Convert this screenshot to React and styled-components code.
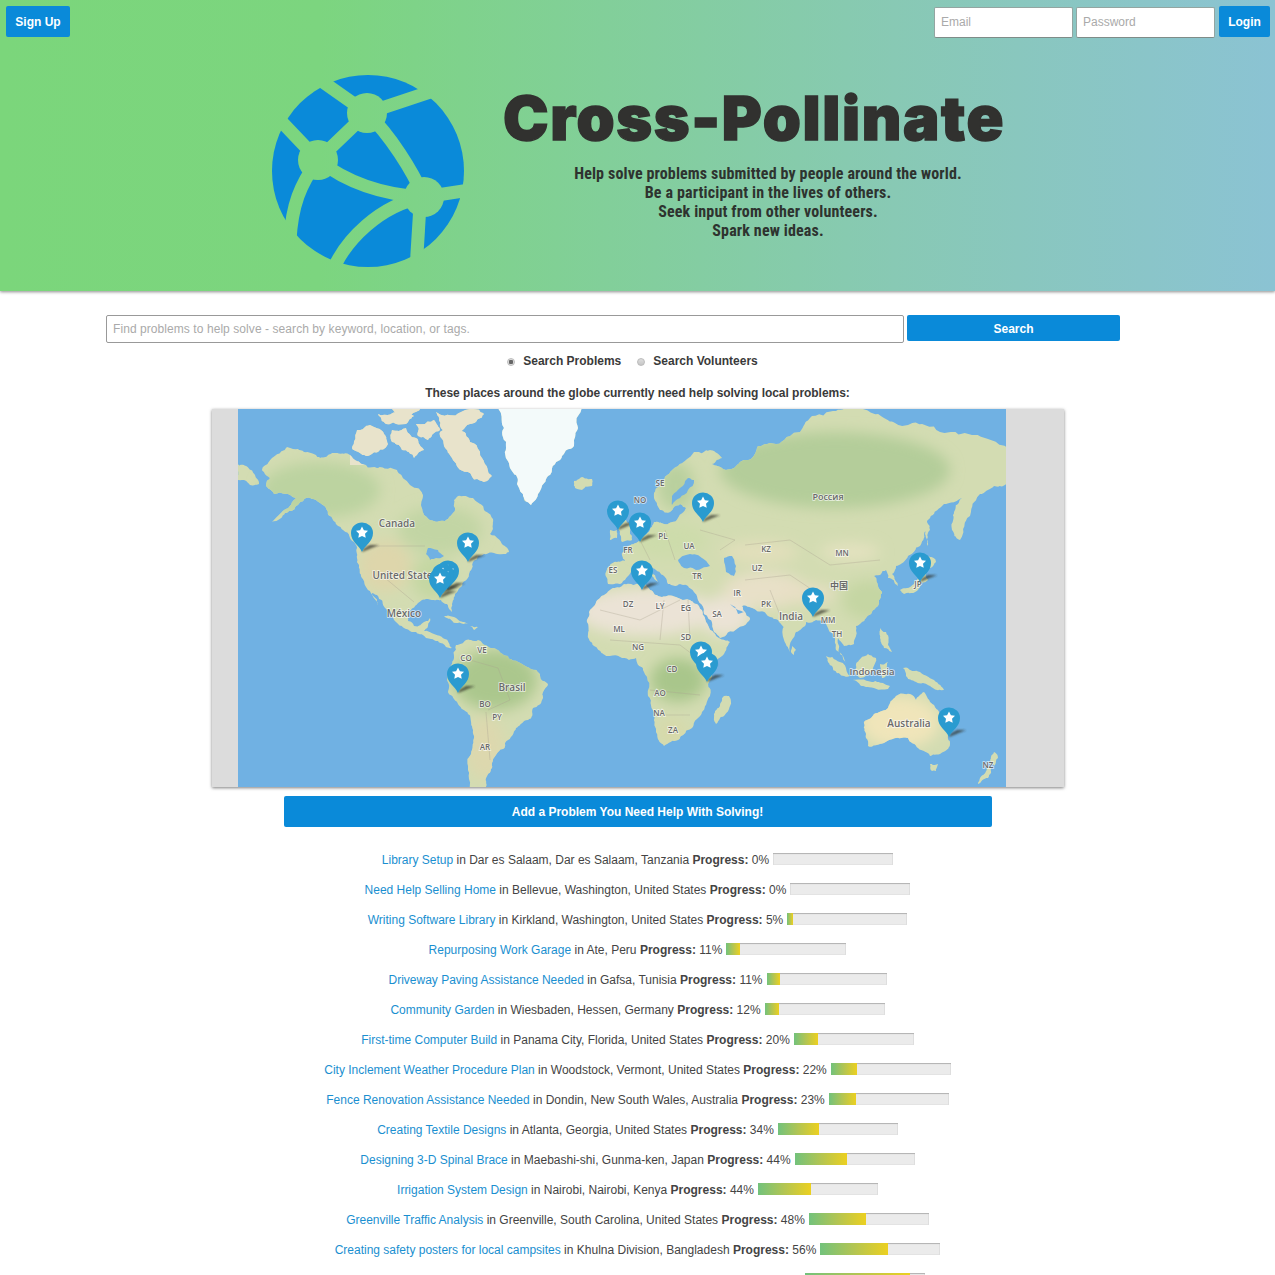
import React from "react";
import styled, { createGlobalStyle } from "styled-components";

const BLUE = "#0a8ad9";

const GlobalStyle = createGlobalStyle`
  html, body {
    margin: 0;
    padding: 0;
    overflow: hidden;
    background: #fff;
    font-family: "Liberation Sans", Arial, sans-serif;
    font-size: 12px;
    color: #333;
  }
  * {
    box-sizing: border-box;
  }
`;

const Hero = styled.header`
  height: 291px;
  background: linear-gradient(90deg, #7bd67b 0%, #7cd57f 25%, #88c9b4 70%, #8bc3d3 100%);
  box-shadow: 0 1px 3px rgba(0, 0, 0, 0.45);
`;

const TopBar = styled.div`
  display: flex;
  justify-content: space-between;
  padding: 6px 5px 0 6px;
`;

const LoginForm = styled.form`
  display: flex;
  gap: 3px;
`;

const Button = styled.button`
  height: 31px;
  padding: 0 9px;
  border: 0;
  border-radius: 2px;
  background: ${BLUE};
  color: #fff;
  font: bold 12px "Liberation Sans", Arial, sans-serif;
`;

const SignUpButton = styled(Button)`
  width: 64px;
  padding: 0;
`;

const LoginButton = styled(Button)`
  width: 51px;
  margin-left: 1px;
  padding: 0;
`;

const TextInput = styled.input`
  width: 139px;
  height: 31px;
  margin-top: 1px;
  padding: 0 6px 2px;
  border: 1px solid #93a5a1;
  border-bottom-color: #7f8c88;
  border-radius: 2px;
  background: #fff;
  font: 12px "Liberation Sans", Arial, sans-serif;
  &::placeholder {
    color: #aaa;
    opacity: 1;
  }
`;

const Brand = styled.div`
  display: flex;
  gap: 39px;
  padding: 37px 0 0 272px;
`;

const BrandText = styled.div`
  width: 530px;
`;

const Title = styled.h1`
  margin: 0;
  width: 500px;
  font: 900 61px/86px Inter, "Liberation Sans", sans-serif;
  letter-spacing: 1.65px;
  white-space: nowrap;
  color: #31312f;
  -webkit-text-stroke: 1.4px #31312f;
`;

const Tagline = styled.p`
  margin: 3px 0 0;
  text-align: center;
  font: bold 16px/19px "Liberation Sans Narrow", "Roboto Condensed", Roboto, sans-serif;
  letter-spacing: 0.14px;
  color: #2e332f;
`;

const Main = styled.main`
  display: flex;
  flex-direction: column;
  align-items: center;
`;

const SearchRow = styled.div`
  display: flex;
  align-items: flex-start;
  gap: 3px;
  width: 1014px;
  margin: 24px 49px 0 0;
`;

const SearchInput = styled(TextInput)`
  flex: 1;
  width: auto;
  height: 28px;
  margin: 0;
  padding: 0 6px;
  border: 1px solid #999;
  letter-spacing: 0.07px;
`;

const SearchButton = styled(Button)`
  width: 213px;
  height: 26px;
  padding-top: 1px;
`;

const RadioRow = styled.div`
  display: flex;
  gap: 16px;
  margin: 10px 10px 0 0;
  height: 15px;
  align-items: center;
`;

const RadioLabel = styled.label`
  display: flex;
  align-items: center;
  gap: 8px;
  font-weight: bold;
  color: #3a3a3a;
`;

const RadioDot = styled.span`
  width: 8px;
  height: 8px;
  margin-top: 2px;
  border-radius: 50%;
  border: 1px solid #bbb;
  background: ${(p) =>
    p.$on ? "radial-gradient(circle, #666 0 2px, #ddd 2.5px)" : "linear-gradient(#ddd, #c6c6c6)"};
`;

const MapHeading = styled.h2`
  margin: 18px 0 8px;
  font: bold 12px/15px "Liberation Sans", Arial, sans-serif;
  letter-spacing: -0.04px;
  color: #3a3a3a;
`;

const MapFrame = styled.div`
  display: flex;
  width: 852px;
  height: 378px;
  padding-left: 26px;
  margin-left: 1px;
  background: #dcdcdc;
  box-shadow: 0 1px 3px rgba(0, 0, 0, 0.5);
`;

const AddButton = styled(Button)`
  width: 708px;
  margin-top: 9px;
`;

const ProblemList = styled.ul`
  list-style: none;
  margin: 18px 0 0;
  padding: 0;
  width: 100%;
`;

const ProblemRow = styled.li`
  height: 30px;
  line-height: 30px;
  text-align: center;
  white-space: nowrap;
  color: #444;
`;

const ProblemLink = styled.a`
  color: #1a8fd0;
  text-decoration: none;
`;

const Track = styled.span`
  display: inline-block;
  vertical-align: middle;
  width: 120px;
  height: 12px;
  margin: -3px 0 0 4px;
  background: #ebebeb;
  box-shadow: inset 0 1px 1px rgba(0, 0, 0, 0.22), inset 0 0 0 1px rgba(0, 0, 0, 0.03);
  text-align: left;
  line-height: 0;
`;

const Fill = styled.span`
  display: block;
  height: 100%;
  background: linear-gradient(90deg, #72c27c 0%, #b3c552 50%, #ecd020 100%);
`;

// roughens a polygon so coasts don't look like smooth blobs
let seed = 7;
const rand = () => {
  seed = (seed * 16807) % 2147483647;
  return seed / 2147483647 - 0.5;
};

const coast = (pts, levels = 3) => {
  let out = pts;
  for (let l = 0; l < levels; l++) {
    const next = [];
    out.forEach((p, i) => {
      const q = out[(i + 1) % out.length];
      const len = Math.hypot(q[0] - p[0], q[1] - p[1]);
      next.push(p);
      if (len > 2.5) {
        next.push([
          (p[0] + q[0]) / 2 + rand() * len * 0.3,
          (p[1] + q[1]) / 2 + rand() * len * 0.3,
        ]);
      }
    });
    out = next;
  }
  return "M" + out.map((p) => `${p[0].toFixed(1)} ${p[1].toFixed(1)}`).join("L") + "Z";
};

const land = [
  // chukotka tip
  [[236, 462], [246, 466], [255, 475], [259, 484], [250, 485], [244, 480], [236, 480]],
  // north america
  [[262, 470], [272, 458], [287, 447], [304, 452], [320, 458], [336, 453], [350, 455], [362, 464], [377, 468], [397, 470], [410, 485], [423, 495], [421, 505], [424, 515], [440, 521], [453, 513], [454, 500], [458, 496], [473, 498], [484, 510], [493, 519], [490, 534], [503, 545], [509, 552], [494, 553], [484, 554], [473, 562], [469, 574], [462, 586], [455, 594], [452, 604], [452, 612], [447, 604], [441, 600], [428, 599], [418, 603], [409, 611], [408, 621], [414, 626], [424, 622], [430, 618], [428, 626], [424, 631], [434, 634], [442, 637], [452, 648], [446, 647], [438, 641], [426, 638], [416, 632], [404, 628], [394, 620], [385, 608], [378, 596], [372, 593], [378, 605], [368, 590], [361, 576], [357, 562], [357, 548], [350, 538], [343, 530], [333, 520], [326, 508], [316, 500], [306, 498], [296, 506], [285, 513], [272, 522], [284, 510], [296, 498], [288, 494], [274, 494], [266, 486], [270, 478]],
  // arctic islands
  [[357, 430], [372, 426], [384, 434], [388, 444], [378, 452], [366, 456], [352, 448]],
  [[378, 414], [400, 411], [414, 416], [406, 424], [386, 424]],
  [[392, 430], [406, 428], [416, 438], [424, 450], [414, 458], [402, 450], [392, 442]],
  [[416, 424], [434, 420], [440, 430], [428, 440], [418, 436]],
  [[440, 432], [458, 428], [470, 442], [484, 462], [492, 476], [484, 482], [468, 472], [452, 458], [444, 446]],
  [[436, 412], [470, 409], [484, 414], [470, 424], [452, 436], [440, 426]],
  [[392, 409], [420, 409], [412, 414], [396, 414]],
  // greenland
  [[497, 405], [582, 405], [578, 428], [574, 446], [560, 460], [548, 476], [538, 494], [531, 505], [524, 500], [517, 484], [510, 468], [506, 448], [504, 428]],
  // iceland
  [[574, 481], [582, 477], [592, 479], [592, 486], [582, 490], [575, 488]],
  // south america
  [[456, 645], [466, 640], [478, 640], [492, 648], [508, 656], [522, 664], [540, 674], [548, 684], [543, 698], [533, 708], [528, 720], [516, 728], [508, 740], [498, 752], [492, 768], [486, 778], [484, 790], [468, 790], [468, 770], [472, 750], [473, 730], [468, 714], [458, 704], [448, 692], [447, 680], [450, 668], [454, 658]],
  // africa
  [[587, 622], [590, 610], [600, 598], [610, 590], [624, 584], [642, 582], [650, 590], [662, 597], [676, 597], [690, 600], [697, 604], [706, 622], [716, 636], [730, 642], [724, 654], [712, 668], [708, 684], [710, 696], [702, 712], [692, 728], [678, 740], [664, 746], [656, 732], [654, 712], [648, 696], [644, 672], [636, 658], [622, 658], [606, 656], [594, 646], [588, 634]],
  // eurasia
  [[607, 568], [617, 562], [625, 561], [622, 553], [628, 546], [640, 540], [650, 530], [654, 522], [664, 524], [678, 518], [686, 508], [680, 504], [670, 512], [660, 510], [654, 498], [662, 482], [678, 466], [694, 452], [710, 450], [722, 458], [712, 464], [726, 470], [740, 462], [752, 458], [758, 446], [776, 444], [800, 432], [812, 416], [836, 411], [863, 409], [884, 418], [908, 425], [940, 432], [972, 435], [1010, 448], [1010, 482], [994, 486], [980, 494], [970, 516], [960, 540], [952, 530], [954, 512], [962, 498], [944, 504], [930, 518], [926, 530], [920, 546], [908, 556], [896, 566], [892, 574], [898, 586], [888, 578], [886, 570], [874, 576], [882, 592], [878, 606], [866, 618], [856, 626], [854, 644], [844, 646], [838, 638], [846, 664], [836, 650], [834, 636], [826, 622], [816, 620], [806, 622], [796, 632], [790, 652], [784, 640], [778, 620], [768, 616], [756, 610], [742, 606], [746, 614], [750, 618], [738, 628], [720, 638], [714, 632], [704, 614], [698, 600], [694, 592], [688, 586], [680, 584], [668, 584], [664, 576], [656, 570], [650, 566], [658, 582], [652, 576], [644, 566], [632, 566], [628, 576], [620, 584], [608, 584]],
  // britain, ireland
  [[619, 520], [626, 520], [630, 534], [632, 540], [622, 542], [620, 532]],
  [[610, 530], [617, 530], [617, 538], [610, 540]],
  // japan, sakhalin
  [[928, 556], [936, 562], [930, 568], [924, 562]],
  [[926, 570], [928, 580], [918, 590], [904, 594], [900, 590], [914, 584]],
  [[926, 520], [930, 530], [928, 546], [925, 534]],
  // philippines, indonesia, png
  [[880, 628], [886, 632], [888, 644], [892, 652], [884, 648], [880, 638]],
  [[826, 656], [836, 660], [850, 676], [844, 676], [832, 666]],
  [[856, 664], [868, 654], [876, 658], [872, 672], [860, 678], [855, 672]],
  [[853, 680], [872, 682], [890, 686], [888, 689], [866, 687]],
  [[880, 664], [888, 662], [888, 674], [882, 678]],
  [[903, 668], [920, 672], [934, 680], [944, 690], [930, 686], [916, 682], [906, 676]],
  // australia, tasmania, nz
  [[864, 722], [874, 714], [888, 708], [896, 696], [910, 694], [916, 700], [924, 692], [930, 702], [940, 714], [950, 730], [950, 744], [940, 754], [930, 756], [918, 748], [908, 738], [896, 738], [880, 744], [868, 746], [866, 734]],
  [[930, 764], [938, 764], [936, 771], [932, 771]],
  [[994, 752], [998, 758], [994, 766], [990, 760]],
  [[987, 768], [992, 764], [988, 778], [978, 784], [980, 778]],
  // madagascar, sri lanka, caribbean
  [[724, 696], [729, 696], [724, 716], [716, 724], [714, 714], [720, 706]],
  [[792, 646], [796, 650], [794, 655], [791, 652]],
  [[444, 616], [456, 618], [468, 624], [456, 623]],
  [[470, 626], [478, 627], [474, 630]],
].map((pts) => coast(pts));

const water = [
  // baltic, black sea, caspian, gulf
  [[672, 505], [680, 498], [688, 490], [694, 480], [688, 478], [680, 488], [672, 496]],
  [[678, 560], [690, 554], [702, 558], [710, 566], [696, 570], [684, 568]],
  [[724, 558], [732, 556], [736, 566], [734, 576], [726, 572]],
  [[730, 604], [738, 610], [744, 612], [738, 614]],
  // great lakes
  [[428, 548], [438, 550], [444, 556], [436, 558], [430, 560], [426, 554]],
  [[640, 562], [648, 566], [640, 568]],
].map((pts) => coast(pts, 2));

const blobs = [
  ["#b4cd9a", 835, 470, 115, 38],
  ["#bcd3a0", 320, 490, 60, 28],
  ["#c2d5a4", 440, 530, 42, 24],
  ["#ded6ab", 385, 566, 26, 26],
  ["#c4d7a2", 432, 578, 20, 22],
  ["#abc78d", 495, 680, 42, 30],
  ["#ddd8ae", 485, 748, 20, 32],
  ["#ebe3d6", 645, 612, 68, 24],
  ["#ebe3d6", 725, 616, 26, 20],
  ["#e8e0c8", 765, 590, 42, 18],
  ["#a9c68b", 678, 680, 28, 22],
  ["#d8d9a8", 672, 732, 14, 12],
  ["#f0e5ba", 900, 722, 40, 26],
  ["#c5d6a3", 870, 600, 28, 20],
  ["#e8dfc5", 805, 594, 30, 9],
  ["#e2dfbb", 760, 552, 38, 11],
  ["#e4e2c0", 850, 552, 30, 9],
  ["#cddcab", 668, 540, 40, 18],
  ["#b9d09e", 676, 486, 18, 24],
];

const borders = [
  "M362 546L425 546",
  "M385 578L414 602",
  "M470 660L498 668L510 700L488 710",
  "M486 712L490 760",
  "M600 610L640 620L680 600",
  "M664 600L660 640M688 600L690 640",
  "M610 640L680 645L700 660",
  "M650 690L700 695M655 715L690 715",
  "M745 545L790 540L830 565L880 560",
  "M745 580L790 575L820 595",
  "M770 590L780 615",
  "M700 530L735 540L720 550",
  "M665 530L675 560M640 540L650 560",
];

const labels = [
  ["Canada", 397, 527, 10],
  ["United States", 405, 579, 10],
  ["México", 404, 617, 10],
  ["Brasil", 512, 691, 10],
  ["Россия", 828, 500, 9],
  ["India", 791, 620, 10],
  ["Indonesia", 872, 675, 9.5],
  ["Australia", 909, 727, 10],
  ["中国", 839, 589, 9],
  ["SE", 660, 486, 8],
  ["NO", 640, 503, 8],
  ["PL", 663, 539, 8],
  ["UA", 689, 549, 8],
  ["FR", 628, 553, 8],
  ["ES", 613, 573, 8],
  ["DZ", 628, 607, 8],
  ["LY", 660, 609, 8],
  ["EG", 686, 611, 8],
  ["SA", 717, 617, 8],
  ["TR", 697, 579, 8],
  ["IR", 737, 596, 8],
  ["PK", 766, 607, 8],
  ["ML", 619, 632, 8],
  ["NG", 638, 650, 8],
  ["SD", 686, 640, 8],
  ["CD", 672, 672, 8],
  ["AO", 660, 696, 8],
  ["NA", 659, 716, 8],
  ["ZA", 673, 733, 8],
  ["VE", 482, 653, 8],
  ["CO", 466, 661, 8],
  ["BO", 485, 707, 8],
  ["PY", 497, 720, 8],
  ["AR", 485, 750, 8],
  ["KZ", 766, 552, 8],
  ["UZ", 757, 571, 8],
  ["MN", 842, 556, 8],
  ["MM", 828, 623, 8],
  ["TH", 837, 637, 8],
  ["JP", 918, 587, 8],
  ["NZ", 988, 768, 8],
];

const pins = [
  [362, 552], [468, 562], [448, 590], [443, 593], [440, 598],
  [618, 530], [640, 542], [642, 590], [703, 522],
  [920, 582], [813, 617], [701, 671], [707, 682], [949, 737], [458, 693],
];

const MapLabel = styled.text`
  font-family: "Open Sans", "Noto Sans CJK SC", sans-serif;
  font-weight: 600;
  fill: #6a6a6a;
  stroke: rgba(255, 255, 255, 0.7);
  stroke-width: 1.6px;
  paint-order: stroke;
  text-anchor: middle;
`;

const Pin = ({ x, y }) => (
  <g transform={`translate(${x} ${y})`}>
    <path d="M0 0L17 -7L8 -7L1 -3Z" fill="#2f2f25" opacity="0.7" filter="url(#pinShadow)" />
    <path d="M0 0C-3 -7 -11 -10 -11 -19A11 10.5 0 1 1 11 -19C11 -10 3 -7 0 0Z" fill="#2a9bd0" />
    <path
      d="M0 -25.5L1.9 -21.8L6 -21.2L3 -18.3L3.7 -14.2L0 -16.1L-3.7 -14.2L-3 -18.3L-6 -21.2L-1.9 -21.8Z"
      fill="#fff"
    />
  </g>
);

const WorldMap = () => (
  <svg width="768" height="378" viewBox="238 409 768 378">
    <defs>
      <clipPath id="landClip">
        {land.map((d, i) => (
          <path key={i} d={d} />
        ))}
      </clipPath>
      <filter id="soft" x="-30%" y="-30%" width="160%" height="160%">
        <feGaussianBlur stdDeviation="7" />
      </filter>
      <filter id="pinShadow" x="-30%" y="-50%" width="160%" height="200%">
        <feGaussianBlur stdDeviation="0.8" />
      </filter>
    </defs>
    <rect x="238" y="409" width="768" height="378" fill="#70b1e3" />
    <g clipPath="url(#landClip)">
      <rect x="238" y="409" width="768" height="378" fill="#d3dcb2" />
      <g filter="url(#soft)">
        {blobs.map(([fill, cx, cy, rx, ry], i) => (
          <ellipse key={i} cx={cx} cy={cy} rx={rx} ry={ry} fill={fill} />
        ))}
      </g>
      <path d="M490 405H590V470L531 510L495 450Z" fill="#f3fafa" />
      <path d="M350 405H490V440L492 485H440L410 465H350Z" fill="#e8e3cb" />
      <path d={borders.join("")} fill="none" stroke="#a8a08f" strokeWidth="0.5" opacity="0.7" />
    </g>
    {water.map((d, i) => (
      <path key={i} d={d} fill="#70b1e3" />
    ))}
    {labels.map(([name, x, y, size]) => (
      <MapLabel key={name} x={x} y={y} fontSize={size}>
        {name}
      </MapLabel>
    ))}
    {pins.map(([x, y], i) => (
      <Pin key={i} x={x} y={y} />
    ))}
  </svg>
);

const GlobeLogo = () => (
  <svg width="192" height="192" viewBox="272 75 192 192">
    <defs>
      <mask id="globeCuts">
        <rect x="272" y="75" width="192" height="192" fill="#fff" />
        <g fill="none" stroke="#000" strokeWidth="13">
          <path d="M320 80L367 113L430 92" />
          <path d="M367 113L318 160L278 118" />
          <path d="M318 160C300 185 292 205 290 240" />
          <path d="M318 160C350 185 385 195 424 197" />
          <path d="M367 113C390 135 412 170 424 197L470 190" />
          <path d="M420 205L416 270" />
          <path d="M424 197C380 205 345 240 332 272" />
        </g>
        <circle cx="367" cy="113" r="20" fill="#000" />
        <circle cx="318" cy="160" r="20" fill="#000" />
        <circle cx="424" cy="197" r="20" fill="#000" />
      </mask>
    </defs>
    <circle cx="368" cy="171" r="96" fill={BLUE} mask="url(#globeCuts)" />
  </svg>
);

const problems = [
  ["Library Setup", "Dar es Salaam, Dar es Salaam, Tanzania", 0],
  ["Need Help Selling Home", "Bellevue, Washington, United States", 0],
  ["Writing Software Library", "Kirkland, Washington, United States", 5],
  ["Repurposing Work Garage", "Ate, Peru", 11],
  ["Driveway Paving Assistance Needed", "Gafsa, Tunisia", 11],
  ["Community Garden", "Wiesbaden, Hessen, Germany", 12],
  ["First-time Computer Build", "Panama City, Florida, United States", 20],
  ["City Inclement Weather Procedure Plan", "Woodstock, Vermont, United States", 22],
  ["Fence Renovation Assistance Needed", "Dondin, New South Wales, Australia", 23],
  ["Creating Textile Designs", "Atlanta, Georgia, United States", 34],
  ["Designing 3-D Spinal Brace", "Maebashi-shi, Gunma-ken, Japan", 44],
  ["Irrigation System Design", "Nairobi, Nairobi, Kenya", 44],
  ["Greenville Traffic Analysis", "Greenville, South Carolina, United States", 48],
  ["Creating safety posters for local campsites", "Khulna Division, Bangladesh", 56],
  ["Community Health Outreach Program and Training", "Kazan, Russia", 88],
];

const App = () => (
  <>
    <GlobalStyle />
    <Hero>
      <TopBar>
        <SignUpButton>Sign Up</SignUpButton>
        <LoginForm>
          <TextInput placeholder="Email" />
          <TextInput placeholder="Password" />
          <LoginButton>Login</LoginButton>
        </LoginForm>
      </TopBar>
      <Brand>
        <GlobeLogo />
        <BrandText>
          <Title>Cross-Pollinate</Title>
          <Tagline>
            Help solve problems submitted by people around the world.
            <br />
            Be a participant in the lives of others.
            <br />
            Seek input from other volunteers.
            <br />
            Spark new ideas.
          </Tagline>
        </BrandText>
      </Brand>
    </Hero>
    <Main>
      <SearchRow>
        <SearchInput placeholder="Find problems to help solve - search by keyword, location, or tags." />
        <SearchButton>Search</SearchButton>
      </SearchRow>
      <RadioRow>
        <RadioLabel>
          <RadioDot $on />
          Search Problems
        </RadioLabel>
        <RadioLabel>
          <RadioDot />
          Search Volunteers
        </RadioLabel>
      </RadioRow>
      <MapHeading>These places around the globe currently need help solving local problems:</MapHeading>
      <MapFrame>
        <WorldMap />
      </MapFrame>
      <AddButton>Add a Problem You Need Help With Solving!</AddButton>
      <ProblemList>
        {problems.map(([title, place, pct]) => (
          <ProblemRow key={title}>
            <ProblemLink href="#">{title}</ProblemLink> in {place} <b>Progress:</b> {pct}%
            <Track>
              <Fill style={{ width: `${pct}%` }} />
            </Track>
          </ProblemRow>
        ))}
      </ProblemList>
    </Main>
  </>
);

export default App;
